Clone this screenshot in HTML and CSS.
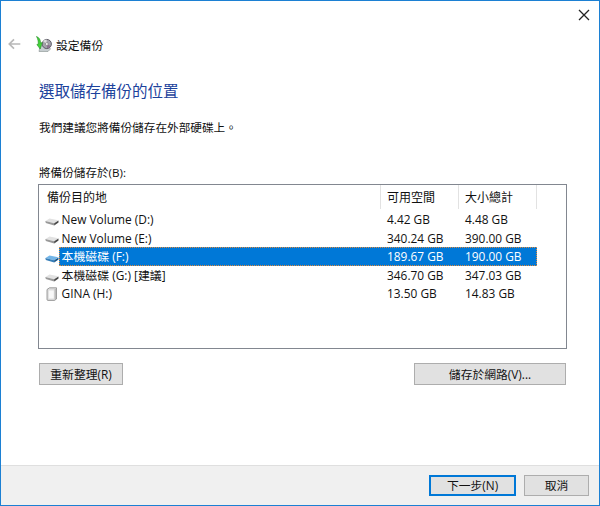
FILE: index.html
```html
<!DOCTYPE html>
<html lang="zh-Hant">
<head>
<meta charset="utf-8">
<title>設定備份</title>
<link rel="stylesheet" href="styles.css">
</head>
<body>
<svg width="0" height="0" class="defs">
  <defs>
    <symbol id="drive" viewBox="0 0 14 9">
      <path d="M0.5 4 4.5 1.5 13.3 3.3 9.2 6.2Z" fill="#e2e2e2"/>
      <path d="M0.3 4 9.2 6.2V8.6L0.8 6.1Z" fill="#999"/>
      <path d="M9.2 6.2 13.5 3.4V5.6L9.2 8.6Z" fill="#484848"/>
    </symbol>
  </defs>
</svg>
<div class="window">
  <header class="titlebar">
    <svg class="close" width="12" height="12" viewBox="0 0 12 12"><path d="M1 1 11 11M11 1 1 11" stroke="#222" stroke-width="1.3"/></svg>
  </header>
  <div class="caption">
    <svg class="back" width="13" height="12" viewBox="0 0 13 12"><path d="M12.3 6H1.5M6 1.3 1.3 6 6 10.7" fill="none" stroke="#b8b8b8" stroke-width="1.7"/></svg>
    <svg class="backup" width="16" height="16" viewBox="0 0 16 16">
      <path d="M4 10 12 9 14.5 13 12 15.5H3Z" fill="#c6cdd0" stroke="#87908f" stroke-width=".6"/>
      <circle cx="10.8" cy="8" r="4.6" fill="#a4a2ac" stroke="#55545e" stroke-width=".9"/>
      <path d="M10.8 8 7 5.3A4.7 4.7 0 0 1 10.5 3.5Z" fill="#ddd"/>
      <path d="M10.8 8 14.6 10A4.3 4.3 0 0 1 11 12.3Z" fill="#8b7190"/>
      <circle cx="10.8" cy="8" r="1.5" fill="#eee" stroke="#666" stroke-width=".5"/>
      <path d="M.5 .5C3.4 1.6 4.6 4 4.5 7L6.2 6.6 4.2 13 .9 8.6 2.3 8C2.4 5 1.8 3 .5 .5Z" fill="#43d339" stroke="#238c25" stroke-width=".6"/>
    </svg>
    <span>設定備份</span>
  </div>
  <main>
    <h1>選取儲存備份的位置</h1>
    <p class="advice">我們建議您將備份儲存在外部硬碟上。</p>
    <div class="label">將備份儲存於(B):</div>
    <div class="list">
      <div class="head"><span>備份目的地</span><span>可用空間</span><span>大小總計</span></div>
      <div class="row"><svg class="drive" width="14" height="9"><use href="#drive"/></svg><div class="cells"><span>New Volume (D:)</span><span>4.42 GB</span><span>4.48 GB</span></div></div>
      <div class="row"><svg class="drive" width="14" height="9"><use href="#drive"/></svg><div class="cells"><span>New Volume (E:)</span><span>340.24 GB</span><span>390.00 GB</span></div></div>
      <div class="row selected"><svg class="drive" width="14" height="9" viewBox="0 0 14 9"><path d="M.5 4 4.5 1.5 13.3 3.3 9.2 6.2Z" fill="#72b5e8"/><path d="M.3 4 9.2 6.2V8.6L.8 6.1Z" fill="#367eb8"/><path d="M9.2 6.2 13.5 3.4V5.6L9.2 8.6Z" fill="#175489"/></svg><div class="cells"><span>本機磁碟 (F:)</span><span>189.67 GB</span><span>190.00 GB</span></div></div>
      <div class="row"><svg class="drive" width="14" height="9"><use href="#drive"/></svg><div class="cells"><span>本機磁碟 (G:) [建議]</span><span>346.70 GB</span><span>347.03 GB</span></div></div>
      <div class="row"><svg class="drive case" width="14" height="14" viewBox="0 0 14 14"><path d="M2 2.5 4.5 .8H11.5V12L9.5 13.4H3Q2 13.4 2 12.4Z" fill="#ddd" stroke="#888" stroke-width=".8"/><path d="M3.8 3.5H8.8V11.5H3.8Z" fill="#f8f8f8"/><path d="M10.2 2V12.5" stroke="#aaa"/></svg><div class="cells"><span>GINA (H:)</span><span>13.50 GB</span><span>14.83 GB</span></div></div>
    </div>
    <div class="actions"><button class="refresh">重新整理(R)</button><button class="network">儲存於網路(V)...</button></div>
  </main>
  <footer><button class="next">下一步(N)</button><button class="cancel">取消</button></footer>
</div>
</body>
</html>
```
FILE: styles.css
```css
* { box-sizing: border-box; }
body {
  margin: 0;
  font: 12px/18px "Open Sans", "Noto Sans CJK TC", sans-serif;
  color: #111;
}
.defs { position: absolute; }
.window {
  display: flex;
  flex-direction: column;
  width: 600px;
  height: 506px;
  border: 1px solid #1c80d3;
  background: #fff;
}
.titlebar {
  display: flex;
  justify-content: flex-end;
  height: 28px;
  padding: 8px 9px 0 0;
}
.caption {
  display: flex;
  align-items: center;
  height: 30px;
  padding-left: 7px;
}
.caption span { padding-top: 1px; font-size: 11.8px; }
.backup { margin: 0 4px 0 15px; }
main { flex: 1; padding: 20px 33px 0 37px; }
h1 {
  margin: 0 0 0 1px;
  font-size: 15.5px;
  line-height: 24px;
  font-weight: 400;
  color: #1c429c;
}
.advice { margin: 16px 0 0 1px; font-size: 11.65px; }
.label { margin: 27px 0 0 1px; font-size: 11.6px; }
.list {
  height: 165px;
  width: 529px;
  margin-top: 2px;
  border: 1px solid #828790;
}
.head, .cells { display: grid; }
.head {
  grid-template-columns: 342px 78px 78px;
  height: 24px;
  margin-bottom: 1px;
}
.head span {
  padding: 4px 0 0 6px;
  border-right: 1px solid #e2e2e2;
}
.head span:first-child { padding-left: 8px; }
.row {
  display: flex;
  align-items: center;
  height: 18.6px;
  padding-left: 6px;
}
.drive { margin: 4px 0 0; flex: none; }
.case { margin-top: 0; }
.cells {
  grid-template-columns: 321px 78px 77px;
  height: 18.6px;
  border: 1px solid transparent;
  line-height: 17px;
  font-size: 11.9px;
}
.cells span { padding-left: 6px; white-space: nowrap; }
.cells span:first-child { padding-left: 1.5px; }
.selected .cells {
  background: #0078d7;
  border: 1px dotted #e08a3c;
  color: #fff;
}
.actions {
  display: flex;
  justify-content: space-between;
  width: 527px;
  margin: 14px 0 0 1px;
}
button {
  height: 22px;
  padding: 0;
  border: 1px solid #adadad;
  background: #e1e1e1;
  color: #111;
  font: inherit;
  font-size: 11.8px;
  line-height: 18px;
}
.refresh { width: 84px; }
.network { width: 152px; }
footer {
  display: flex;
  justify-content: flex-end;
  gap: 8px;
  height: 40px;
  padding: 9px 10px 0 0;
  border-top: 1px solid #dfdfdf;
  background: #f0f0f0;
}
footer button { height: 21px; line-height: 17px; }
.next { width: 87px; border: 2px solid #0078d7; }
.cancel { width: 65px; }
```
